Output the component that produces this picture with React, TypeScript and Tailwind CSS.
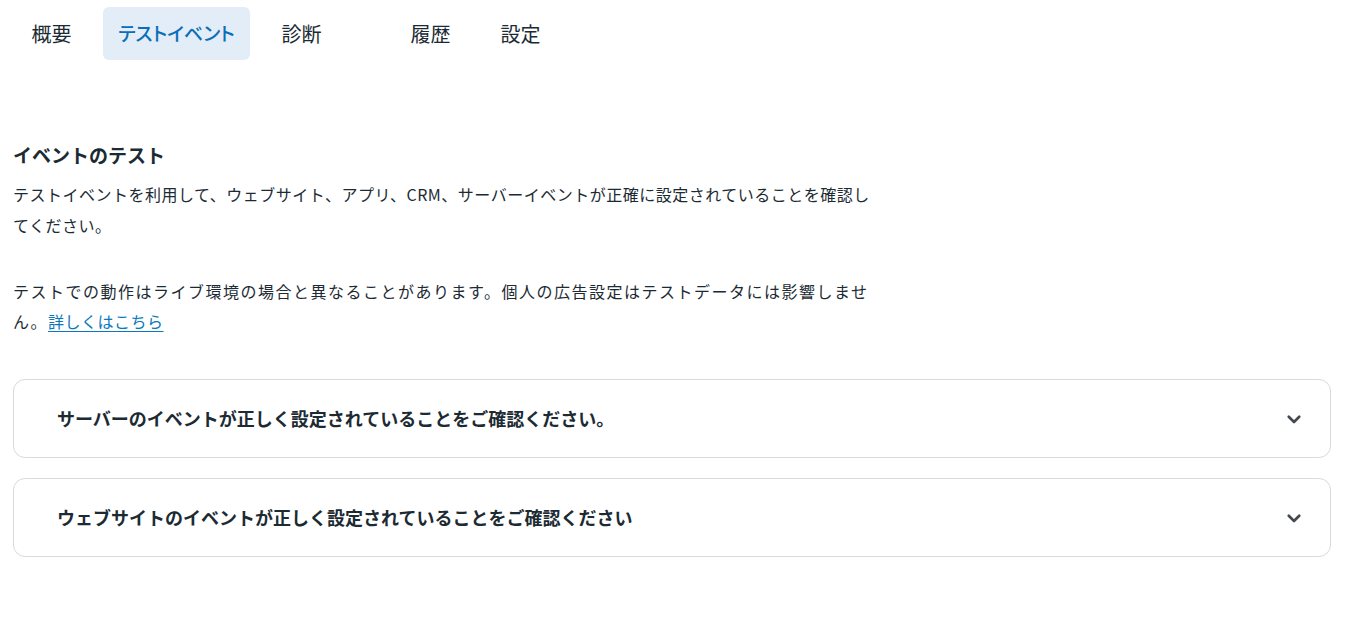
const tabs = [
  { label: '概要', w: 'w-[77px]' },
  { label: 'テストイベント', w: 'w-[147px]', active: true },
  { label: '診断', w: 'w-[77px]' },
  { label: '', w: 'w-[26px]' },
  { label: '履歴', w: 'w-[77px]' },
  { label: '設定', w: 'w-[77px]' },
];

const checks = [
  'サーバーのイベントが正しく設定されていることをご確認ください。',
  'ウェブサイトのイベントが正しく設定されていることをご確認ください',
];

function Chevron() {
  return (
    <svg width="18" height="18" viewBox="0 0 24 24" fill="none" className="text-[#444950]">
      <path d="M5 9l7 7 7-7" stroke="currentColor" strokeWidth="3.6" strokeLinecap="round" strokeLinejoin="round" />
    </svg>
  );
}

export default function App() {
  return (
    <main className="min-h-[619px] w-[1351px] bg-white px-[13px] pt-[7px] font-['Noto_Sans_CJK_JP','Noto_Sans',sans-serif] text-[#1c2b33]">
      <nav className="flex gap-[13px]">
        {tabs.map((t, i) => (
          <div
            key={i}
            className={`flex h-[53px] items-center justify-center rounded-[6px] ${t.w} ${
              t.active
                ? "bg-[#e2edf7] text-[19px] font-medium text-[#0a6fb8] [font-feature-settings:'palt']"
                : 'text-[20px] text-[#1c2b33]'
            }`}
          >
            {t.label}
          </div>
        ))}
      </nav>

      <section className="mt-[83px] w-[880px]">
        <h2 className="text-[19px] font-bold leading-[24px]">イベントのテスト</h2>
        <p className="mt-[12px] text-[16px] leading-[31px] tracking-[0.5px]">
          テストイベントを利用して、ウェブサイト、アプリ、CRM、サーバーイベントが正確に設定されていることを確認し
          <br />
          てください。
        </p>
        <p className="mt-[35px] text-[16px] leading-[30px] tracking-[1.5px]">
          テストでの動作はライブ環境の場合と異なることがあります。個人の広告設定はテストデータには影響しませ
          <br />
          ん。
          <a href="#" className="tracking-[0.5px] text-[#0a78be] underline underline-offset-[3px]">
            詳しくはこちら
          </a>
        </p>
      </section>

      <div className="mt-[43px] flex w-[1318px] flex-col gap-[20px]">
        {checks.map((c) => (
          <div
            key={c}
            className="flex h-[79px] items-center justify-between rounded-[12px] border border-[#d6d9dd] pl-[43px] pr-[27px]"
          >
            <span className="text-[18px] font-bold">{c}</span>
            <Chevron />
          </div>
        ))}
      </div>
    </main>
  );
}
